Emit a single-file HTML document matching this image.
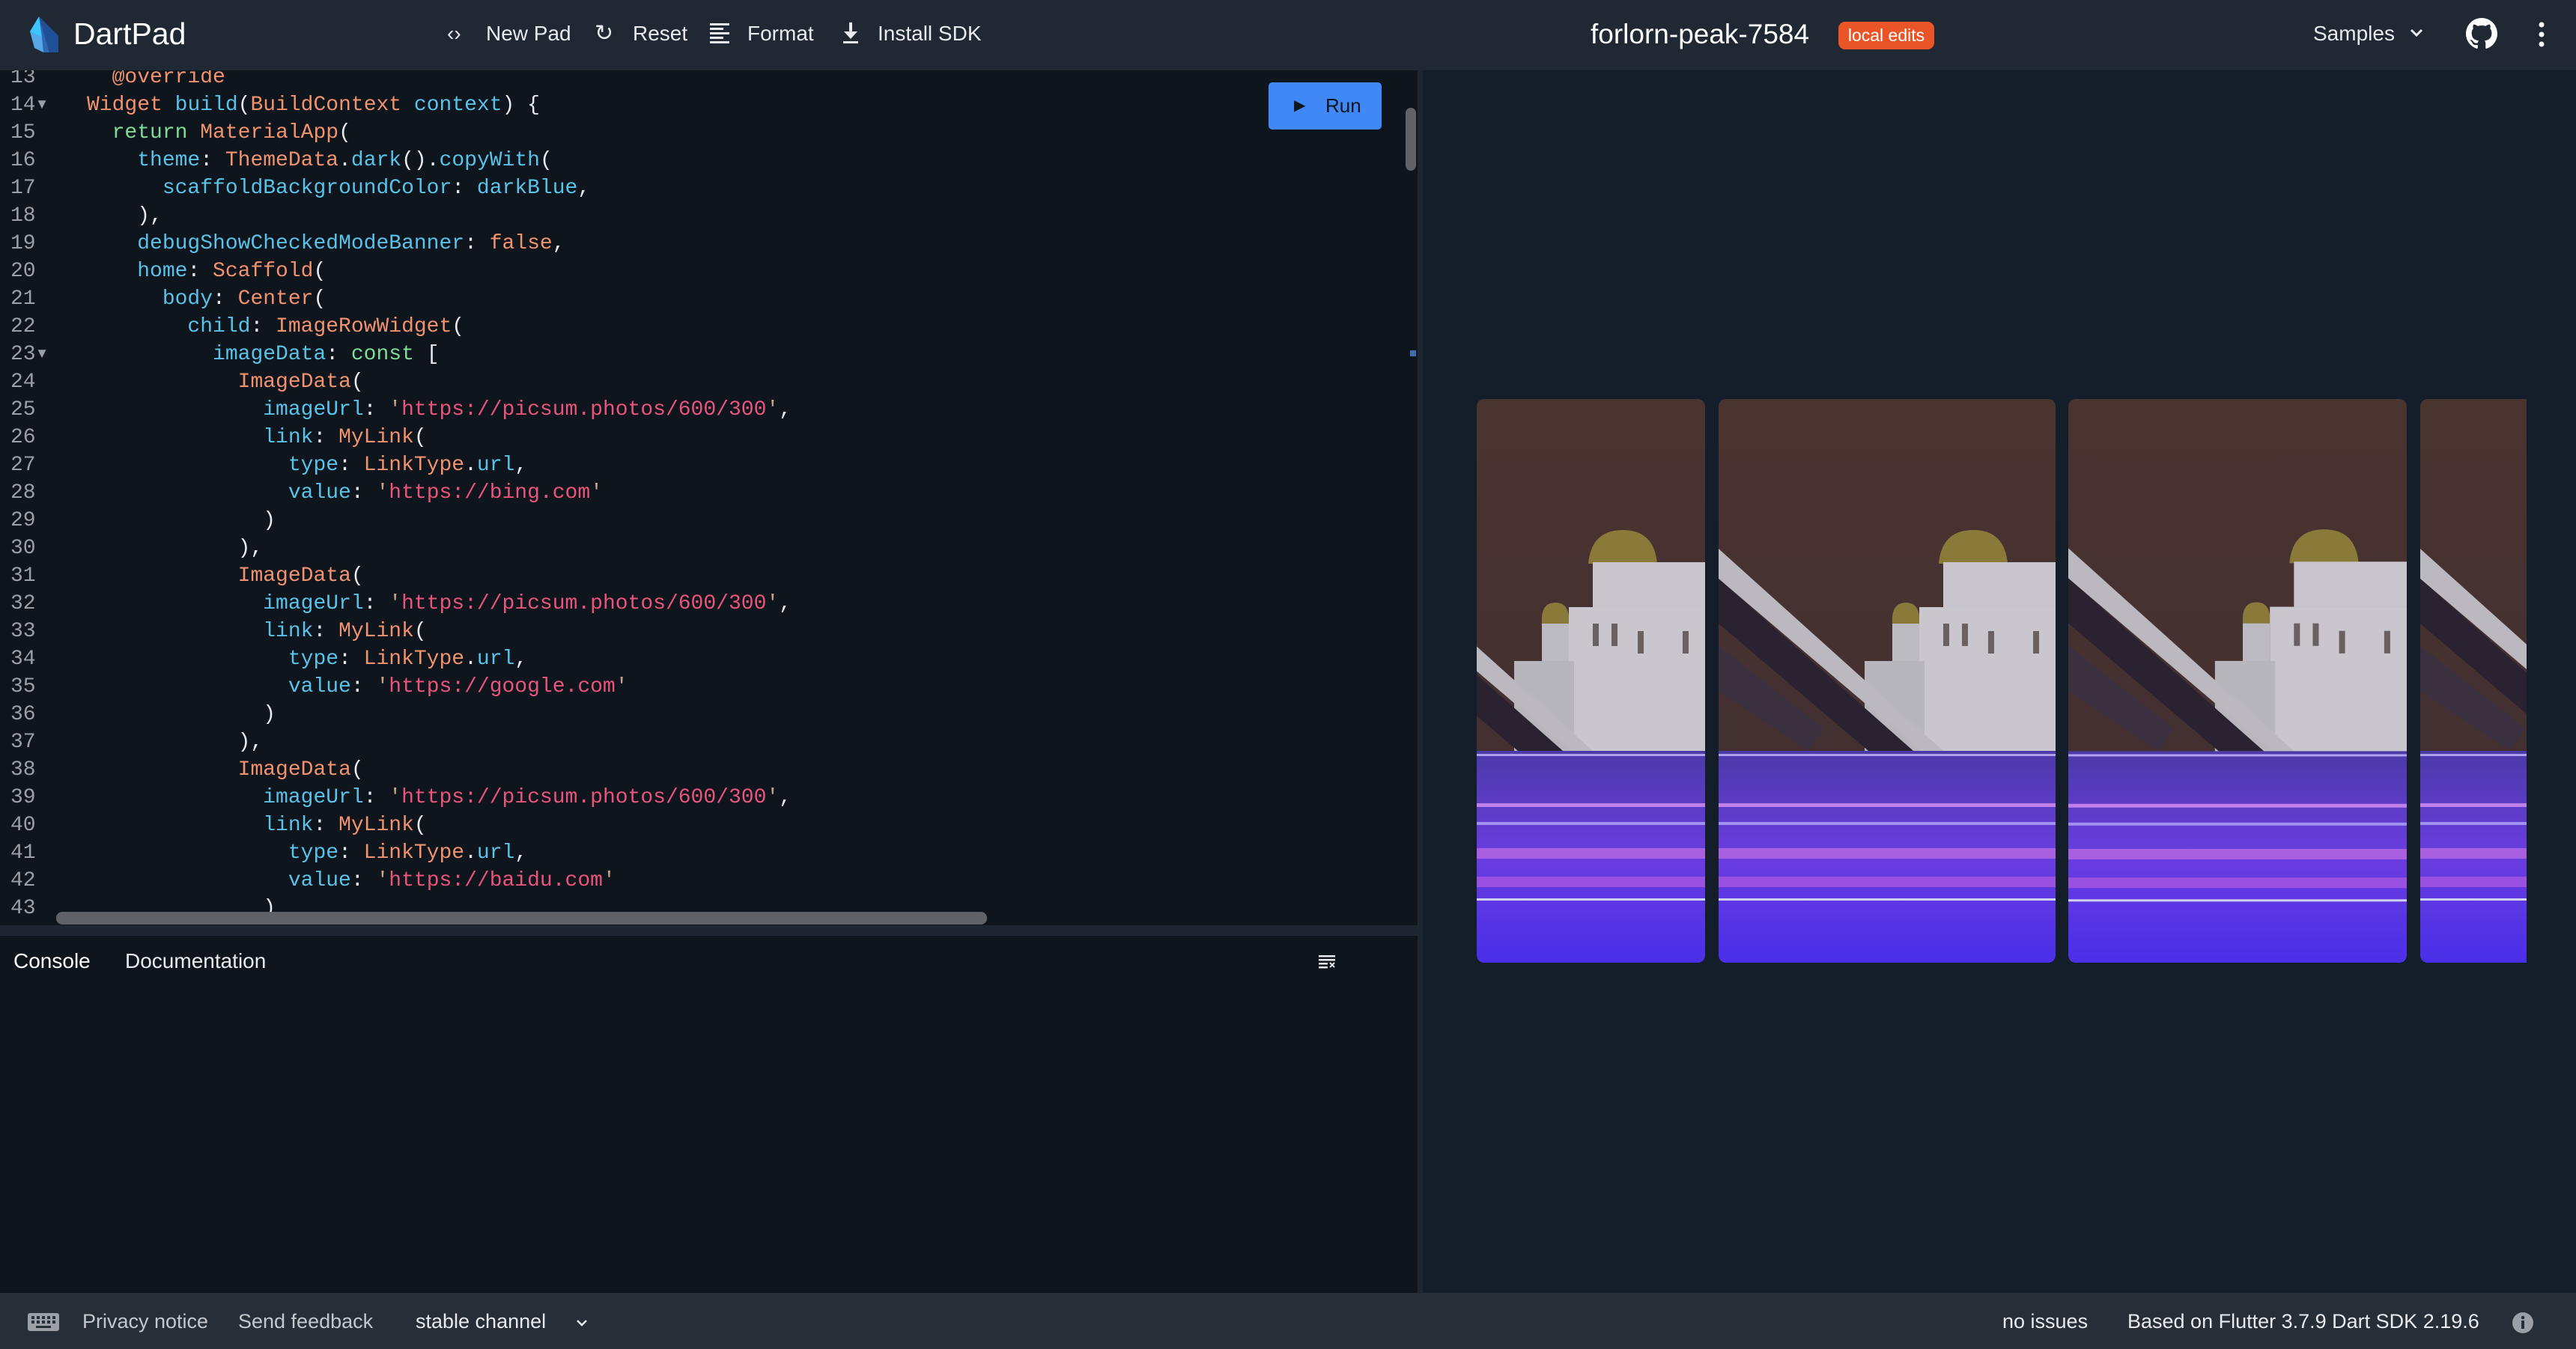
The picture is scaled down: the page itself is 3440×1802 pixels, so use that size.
<!DOCTYPE html>
<html><head><meta charset="utf-8"><style>
*{margin:0;padding:0;box-sizing:border-box}
body{width:3440px;height:1802px;overflow:hidden;background:#141e2b;font-family:"Liberation Sans",sans-serif;color:#fff;position:relative}
.abs{position:absolute}
#hdr{left:0;top:0;width:3440px;height:94px;background:#1f2833}
.nav{position:absolute;top:27px;font-size:28px;color:#e8eaed;line-height:36px}
#ed{left:0;top:94px;width:1893px;height:1142px;background:#0f151d;overflow:hidden}
#code{position:absolute;left:0;top:-9px;font-family:"Liberation Mono",monospace;font-size:28px;line-height:37px;white-space:pre;color:#e8eaed}
.ln{display:inline-block;width:116px;padding-left:14px;color:#9aa0a6}
.b{color:#59c2e8}.o{color:#f0926e}.g{color:#7fdc98}.s{color:#e9557a}.q{color:#c8a08a}
#div{left:0;top:1236px;width:1900px;height:14px;background:#1d2631}
#con{left:0;top:1250px;width:1893px;height:477px;background:#0f151d}
#vsep{left:1893px;top:94px;width:7px;height:1633px;background:#1d2631}
#ftr{left:0;top:1727px;width:3440px;height:75px;background:#262e37}
.ft{position:absolute;top:20px;font-size:27px;color:#e8eaed;line-height:36px}
.img{position:absolute;top:533px;height:753px;border-radius:10px;overflow:hidden}
.img svg{width:100%;height:100%;display:block}
</style></head><body>
<div id="hdr" class="abs">
 <svg class="abs" style="left:36px;top:20px" width="46" height="52" viewBox="0 0 46 52"><path d="M16 2 L4 22 L10 44 L22 50 L42 50 L42 28 Z" fill="#2f67b0"/><path d="M16 2 L42 28 L42 50 L30 50 Z" fill="#1f4f95"/><path d="M4 22 L10 44 L22 50 L20 30 Z" fill="#56a7e8"/><path d="M16 2 L4 22 L20 30 Z" fill="#40c4ff"/></svg>
 <div class="abs" style="left:98px;top:20px;font-size:41px;line-height:50px;color:#fff">DartPad</div>
 <div class="nav" style="left:597px">‹›</div>
 <div class="nav" style="left:649px">New Pad</div>
 <div class="nav" style="left:794px;font-size:30px">↻</div>
 <div class="nav" style="left:845px">Reset</div>
 <svg class="abs" style="left:948px;top:31px" width="28" height="28" viewBox="0 0 28 28" fill="#e8eaed"><rect x="0" y="0" width="26" height="3"/><rect x="0" y="6" width="18" height="3"/><rect x="0" y="12" width="26" height="3"/><rect x="0" y="18" width="18" height="3"/><rect x="0" y="24" width="26" height="3"/></svg>
 <div class="nav" style="left:998px">Format</div>
 <svg class="abs" style="left:1124px;top:30px" width="24" height="30" viewBox="0 0 24 30" fill="#e8eaed"><rect x="10" y="0" width="4" height="14"/><path d="M3 12 L21 12 L12 22 Z"/><rect x="2" y="25" width="20" height="3"/></svg>
 <div class="nav" style="left:1172px">Install SDK</div>
 <div class="abs" style="left:2124px;top:24px;font-size:37px;line-height:44px">forlorn-peak-7584</div>
 <div class="abs" style="left:2455px;top:29px;width:128px;height:37px;background:#ea5528;border-radius:9px;font-size:23px;line-height:37px;text-align:center">local edits</div>
 <div class="nav" style="left:3089px">Samples</div>
 <svg class="abs" style="left:3218px;top:38px" width="18" height="12" viewBox="0 0 18 12"><path d="M2 2 L9 9 L16 2" stroke="#e8eaed" stroke-width="3" fill="none"/></svg>
 <svg class="abs" style="left:3293px;top:24px" width="42" height="42" viewBox="0 0 16 16"><path fill="#fff" d="M8 0C3.580 0 0 3.58 0 8c0 3.54 2.29 6.53 5.47 7.59.4.07.55-.17.55-.38 0-.19-.01-.82-.01-1.49-2.01.37-2.53-.49-2.69-.94-.09-.23-.48-.94-.82-1.130-.28-.15-.68-.52-.01-.53.63-.01 1.08.58 1.23.82.72 1.21 1.87.87 2.33.66.07-.52.28-.87.51-1.07-1.78-.2-3.64-.89-3.64-3.950 0-.87.31-1.59.82-2.15-.08-.2-.36-1.02.08-2.12 0 0 .67-.21 2.2.82.64-.18 1.32-.27 2-.27.68 0 1.36.09 2 .27 1.53-1.04 2.2-.82 2.2-.82.44 1.1.16 1.92.08 2.12.51.56.82 1.27.82 2.15 0 3.07-1.87 3.75-3.65 3.95.29.25.54.73.54 1.48 0 1.07-.01 1.93-.01 2.2 0 .21.15.46.55.38A8.013 8.013 0 0016 8c0-4.42-3.58-8-8-8z"/></svg>
 <svg class="abs" style="left:3389px;top:28px" width="10" height="36" viewBox="0 0 10 36" fill="#fff"><circle cx="5" cy="5" r="3.5"/><circle cx="5" cy="18" r="3.5"/><circle cx="5" cy="31" r="3.5"/></svg>
</div>

<div id="ed" class="abs">
<div id="code"><span class="ln">13</span>  <span class="o">@override</span>
<span class="ln">14▾</span><span class="o">Widget</span> <span class="b">build</span>(<span class="o">BuildContext</span> <span class="b">context</span>) {
<span class="ln">15</span>  <span class="g">return</span> <span class="o">MaterialApp</span>(
<span class="ln">16</span>    <span class="b">theme</span>: <span class="o">ThemeData</span>.<span class="b">dark</span>().<span class="b">copyWith</span>(
<span class="ln">17</span>      <span class="b">scaffoldBackgroundColor</span>: <span class="b">darkBlue</span>,
<span class="ln">18</span>    ),
<span class="ln">19</span>    <span class="b">debugShowCheckedModeBanner</span>: <span class="o">false</span>,
<span class="ln">20</span>    <span class="b">home</span>: <span class="o">Scaffold</span>(
<span class="ln">21</span>      <span class="b">body</span>: <span class="o">Center</span>(
<span class="ln">22</span>        <span class="b">child</span>: <span class="o">ImageRowWidget</span>(
<span class="ln">23▾</span>          <span class="b">imageData</span>: <span class="g">const</span> [
<span class="ln">24</span>            <span class="o">ImageData</span>(
<span class="ln">25</span>              <span class="b">imageUrl</span>: <span class="q">'</span><span class="s">https://picsum.photos/600/300</span><span class="q">'</span>,
<span class="ln">26</span>              <span class="b">link</span>: <span class="o">MyLink</span>(
<span class="ln">27</span>                <span class="b">type</span>: <span class="o">LinkType</span>.<span class="b">url</span>,
<span class="ln">28</span>                <span class="b">value</span>: <span class="q">'</span><span class="s">https://bing.com</span><span class="q">'</span>
<span class="ln">29</span>              )
<span class="ln">30</span>            ),
<span class="ln">31</span>            <span class="o">ImageData</span>(
<span class="ln">32</span>              <span class="b">imageUrl</span>: <span class="q">'</span><span class="s">https://picsum.photos/600/300</span><span class="q">'</span>,
<span class="ln">33</span>              <span class="b">link</span>: <span class="o">MyLink</span>(
<span class="ln">34</span>                <span class="b">type</span>: <span class="o">LinkType</span>.<span class="b">url</span>,
<span class="ln">35</span>                <span class="b">value</span>: <span class="q">'</span><span class="s">https://google.com</span><span class="q">'</span>
<span class="ln">36</span>              )
<span class="ln">37</span>            ),
<span class="ln">38</span>            <span class="o">ImageData</span>(
<span class="ln">39</span>              <span class="b">imageUrl</span>: <span class="q">'</span><span class="s">https://picsum.photos/600/300</span><span class="q">'</span>,
<span class="ln">40</span>              <span class="b">link</span>: <span class="o">MyLink</span>(
<span class="ln">41</span>                <span class="b">type</span>: <span class="o">LinkType</span>.<span class="b">url</span>,
<span class="ln">42</span>                <span class="b">value</span>: <span class="q">'</span><span class="s">https://baidu.com</span><span class="q">'</span>
<span class="ln">43</span>              )
</div>
<div class="abs" style="left:1694px;top:16px;width:151px;height:63px;background:#3f88f5;border-radius:5px;color:#0f151d;font-size:26px;line-height:63px"><span style="position:absolute;left:34px;top:0;font-size:20px">▶</span><span style="position:absolute;left:76px">Run</span></div>
<div class="abs" style="left:1877px;top:50px;width:14px;height:84px;background:#5f6368;border-radius:7px"></div>
<div class="abs" style="left:1883px;top:374px;width:8px;height:8px;background:#3f6fb0"></div>
<div class="abs" style="left:75px;top:1124px;width:1243px;height:17px;background:#5f6368;border-radius:8px"></div>
</div>
<div id="vsep" class="abs"></div>
<div id="div" class="abs"></div>
<div id="con" class="abs">
 <div class="abs" style="left:18px;top:16px;font-size:28px;line-height:36px;color:#fff">Console</div>
 <div class="abs" style="left:167px;top:16px;font-size:28px;line-height:36px;color:#e8eaed">Documentation</div>
 <svg class="abs" style="left:1761px;top:24px" width="24" height="20" viewBox="0 0 24 20" fill="#e8eaed"><rect x="0" y="2" width="22" height="2.5"/><rect x="0" y="7" width="22" height="2.5"/><rect x="0" y="12" width="12" height="2.5"/><rect x="0" y="17" width="12" height="2.5"/><path d="M15 12 L21 18 M21 12 L15 18" stroke="#e8eaed" stroke-width="2"/></svg>
</div>

<svg width="0" height="0" style="position:absolute"><defs>
<linearGradient id="sky" x1="0" y1="0" x2="0" y2="1"><stop offset="0" stop-color="#4a3430"/><stop offset="1" stop-color="#3e2d30"/></linearGradient>
<linearGradient id="wat" x1="0" y1="0" x2="0" y2="1"><stop offset="0" stop-color="#4c3aa8"/><stop offset="0.5" stop-color="#6a3de0"/><stop offset="1" stop-color="#4a2fe8"/></linearGradient>
<g id="scene">
<rect width="450" height="753" fill="url(#sky)"/>
<path d="M340 175 q42 0 46 45 l-92 0 q4-45 46-45z" fill="#8a7a3a"/>
<rect x="300" y="218" width="150" height="60" fill="#c8c6cc"/>
<path d="M232 300 q-2-28 18-28 q20 0 18 28z" fill="#8a7a3a"/>
<rect x="232" y="300" width="36" height="80" fill="#bdbbc2"/>
<rect x="268" y="278" width="182" height="195" fill="#c9c7cd"/>
<rect x="195" y="350" width="80" height="123" fill="#b8b6bd"/>
<rect x="300" y="300" width="8" height="30" fill="#6a6060"/><rect x="325" y="300" width="8" height="30" fill="#6a6060"/><rect x="360" y="310" width="8" height="30" fill="#6a6060"/><rect x="420" y="310" width="8" height="30" fill="#6a6060"/>
<path d="M0 200 L300 470 L270 470 L0 240 Z" fill="#bcb8c0"/>
<path d="M0 240 L260 470 L200 470 L0 300 Z" fill="#2a2230"/>
<path d="M0 330 L140 440 L120 470 L0 390Z" fill="#3a3040"/>
<rect y="470" width="450" height="283" fill="url(#wat)"/>
<rect y="474" width="450" height="3" fill="#b0a0f0"/>
<rect y="540" width="450" height="5" fill="#c07ee8"/>
<rect y="565" width="450" height="4" fill="#a090f0"/>
<rect y="600" width="450" height="14" fill="#a860e0"/>
<rect y="638" width="450" height="14" fill="#9a50e0"/>
<rect y="667" width="450" height="3" fill="#d0d0f0"/>
</g></defs></svg>
<div class="img" style="left:1972px;width:305px"><svg viewBox="0 0 450 753" preserveAspectRatio="xMaxYMid slice"><use href="#scene"/></svg></div>
<div class="img" style="left:2295px;width:450px"><svg viewBox="0 0 450 753" preserveAspectRatio="xMidYMid slice"><use href="#scene"/></svg></div>
<div class="img" style="left:2762px;width:452px"><svg viewBox="0 0 450 753" preserveAspectRatio="xMidYMid slice"><use href="#scene"/></svg></div>
<div class="img" style="left:3232px;width:142px;border-radius:10px 0 0 10px"><svg viewBox="0 0 450 753" preserveAspectRatio="xMinYMid slice"><use href="#scene"/></svg></div>

<div id="ftr" class="abs">
 <svg class="abs" style="left:37px;top:27px" width="42" height="24" viewBox="0 0 42 24"><rect width="42" height="24" rx="3" fill="#9aa0a6"/><g fill="#262e37"><rect x="5" y="4" width="4" height="4"/><rect x="12" y="4" width="4" height="4"/><rect x="19" y="4" width="4" height="4"/><rect x="26" y="4" width="4" height="4"/><rect x="33" y="4" width="4" height="4"/><rect x="5" y="10" width="4" height="4"/><rect x="12" y="10" width="4" height="4"/><rect x="19" y="10" width="4" height="4"/><rect x="26" y="10" width="4" height="4"/><rect x="33" y="10" width="4" height="4"/><rect x="11" y="17" width="20" height="3"/></g></svg>
 <div class="ft" style="left:110px;color:#c4c7cb">Privacy notice</div>
 <div class="ft" style="left:318px;color:#c4c7cb">Send feedback</div>
 <div class="ft" style="left:555px">stable channel</div>
 <svg class="abs" style="left:769px;top:35px" width="16" height="10" viewBox="0 0 16 10"><path d="M2 2 L8 8 L14 2" stroke="#e8eaed" stroke-width="2.5" fill="none"/></svg>
 <div class="ft" style="left:2674px">no issues</div>
 <div class="ft" style="left:2841px">Based on Flutter 3.7.9 Dart SDK 2.19.6</div>
 <svg class="abs" style="left:3354px;top:25px" width="30" height="30" viewBox="0 0 30 30"><circle cx="15" cy="15" r="14" fill="#9aa0a6"/><rect x="13" y="12" width="4" height="11" fill="#262e37"/><circle cx="15" cy="8" r="2.3" fill="#262e37"/></svg>
</div>
</body></html>
